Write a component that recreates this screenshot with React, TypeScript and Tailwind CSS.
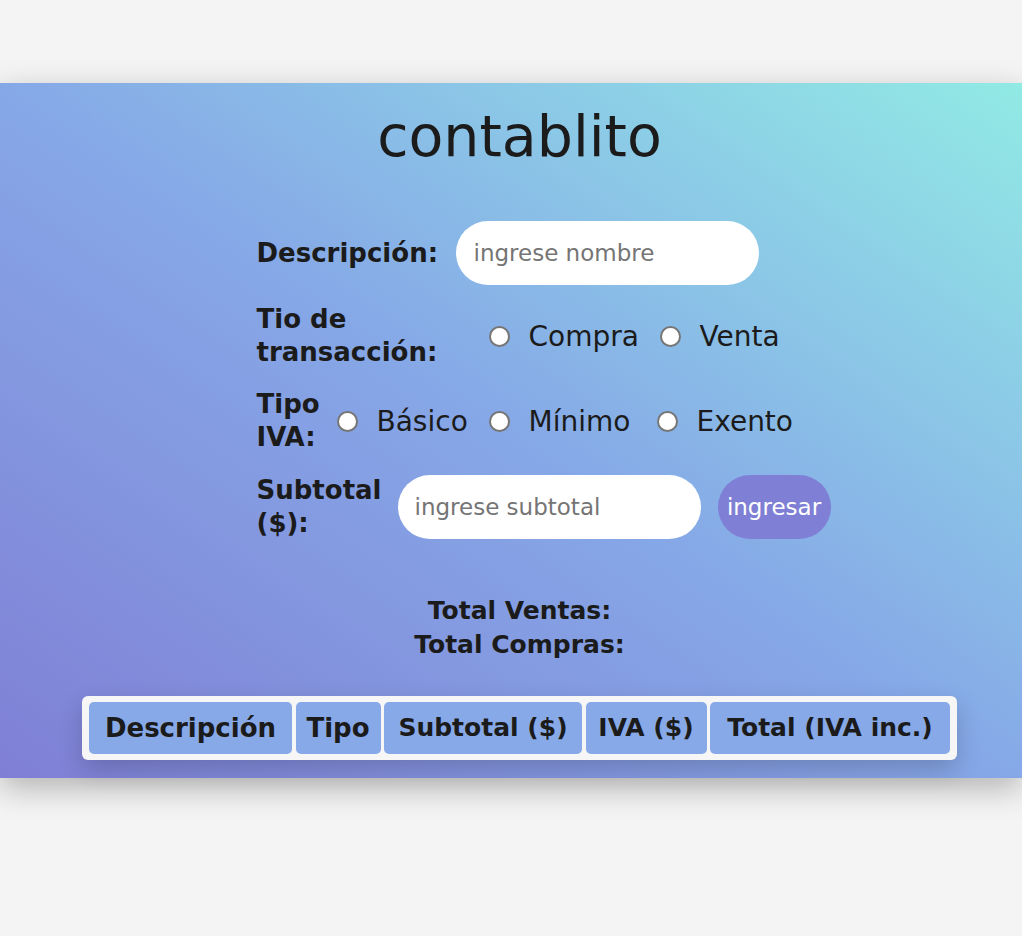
import React from "react";

function Radio({ label, w }: { label: string; w?: string }) {
  return (
    <div className="flex items-center">
      <span className="block h-[21px] w-[21px] shrink-0 rounded-full border-2 border-[#767676] bg-white" />
      <span className={`ml-[19px] text-[28px] leading-[33px] ${w ?? ""}`}>{label}</span>
    </div>
  );
}

export default function App() {
  return (
    <div className="min-h-[936px] bg-[#f4f4f4] pt-[83px] font-['DejaVu_Sans',sans-serif] text-[#1b1b1b]">
      <section className="h-[695px] bg-linear-to-tr from-[#7f7fd5] via-[#86a8e7] to-[#91eae4] pl-[17px] pt-[19px] shadow-[0_10px_30px_rgba(0,0,0,0.27)]">
        <h1 className="text-center text-[57px] font-normal leading-[68px]">contablito</h1>

        <form className="mx-auto mt-[51px] w-[526px]" onSubmit={(e) => e.preventDefault()}>
          <div className="flex h-[64px] items-center">
            <label className="w-[199px] shrink-0 text-[26px] font-bold leading-[33px]">Descripción:</label>
            <input
              className="h-[64px] w-[303px] rounded-full bg-white pl-[18px] text-[23px] outline-none placeholder:text-[#757575]"
              placeholder="ingrese nombre"
            />
          </div>

          <div className="mt-[18px] flex h-[66px] items-center">
            <label className="w-[232px] shrink-0 text-[26px] font-bold leading-[33px]">
              Tio de
              <br />
              transacción:
            </label>
            <Radio label="Compra" w="w-[131px]" />
            <Radio label="Venta" />
          </div>

          <div className="mt-[19px] flex h-[66px] items-center">
            <label className="w-[80px] shrink-0 text-[26px] font-bold leading-[33px]">
              Tipo
              <br />
              IVA:
            </label>
            <Radio label="Básico" w="w-[112px]" />
            <Radio label="Mínimo" w="w-[128px]" />
            <Radio label="Exento" />
          </div>

          <div className="mt-[20px] flex h-[66px] items-center">
            <label className="w-[141px] shrink-0 text-[26px] font-bold leading-[33px]">
              Subtotal
              <br />
              ($):
            </label>
            <input
              className="h-[64px] w-[303px] shrink-0 rounded-full bg-white pl-[17px] text-[23px] outline-none placeholder:text-[#757575]"
              placeholder="ingrese subtotal"
            />
            <button
              type="submit"
              className="ml-[17px] h-[64px] w-[113px] shrink-0 rounded-full bg-[#7f7fd5] text-[23px] text-white"
            >
              ingresar
            </button>
          </div>
        </form>

        <div className="mt-[54px] text-center text-[25px] font-bold leading-[34px]">
          <div>Total Ventas:</div>
          <div>Total Compras:</div>
        </div>

        <div className="mx-auto mt-[34px] flex w-[875px] gap-[3.5px] rounded-[6px] bg-[#f6f6f6] p-[6px_7px] shadow-[0_10px_25px_rgba(0,0,0,0.18)]">
          <div className="flex h-[52px] w-[203px] items-center justify-center rounded-[5px] bg-[#87a9e8] text-[26px] font-bold">Descripción</div>
          <div className="flex h-[52px] w-[85px] items-center justify-center rounded-[5px] bg-[#87a9e8] text-[26px] font-bold">Tipo</div>
          <div className="flex h-[52px] w-[198px] items-center justify-center rounded-[5px] bg-[#87a9e8] text-[25px] font-bold">Subtotal ($)</div>
          <div className="flex h-[52px] w-[121px] items-center justify-center rounded-[5px] bg-[#87a9e8] text-[25px] font-bold">IVA ($)</div>
          <div className="flex h-[52px] w-[240px] items-center justify-center rounded-[5px] bg-[#87a9e8] text-[25px] font-bold">Total (IVA inc.)</div>
        </div>
      </section>
    </div>
  );
}
